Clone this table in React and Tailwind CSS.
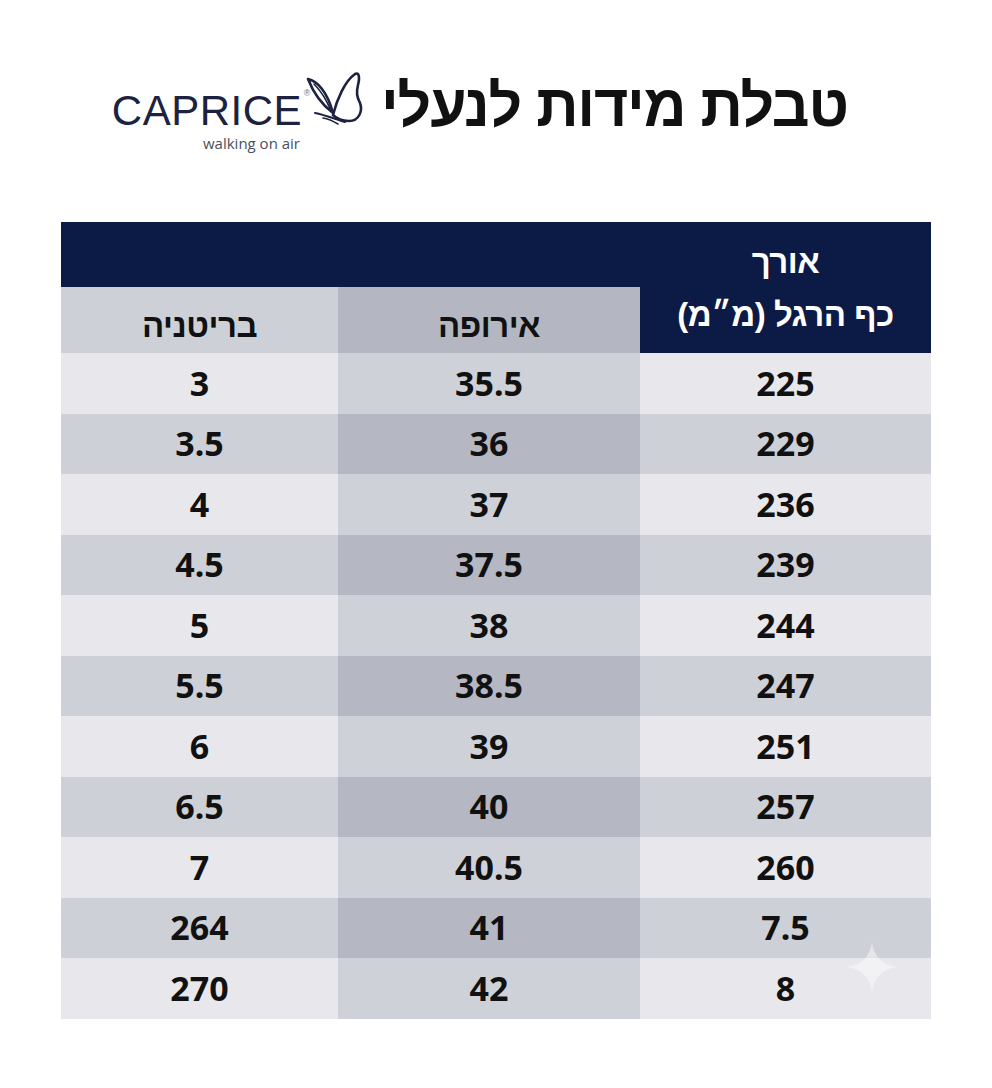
import React from "react";

const rows = [
  ["3", "35.5", "225"],
  ["3.5", "36", "229"],
  ["4", "37", "236"],
  ["4.5", "37.5", "239"],
  ["5", "38", "244"],
  ["5.5", "38.5", "247"],
  ["6", "39", "251"],
  ["6.5", "40", "257"],
  ["7", "40.5", "260"],
  ["264", "41", "7.5"],
  ["270", "42", "8"],
];

const heb = {
  fontFamily: '"Liberation Sans Narrow", "Liberation Sans", "DejaVu Sans", sans-serif',
};
const num = { fontFamily: '"Noto Sans", "Open Sans", sans-serif' };

const Butterfly = () => (
  <svg width="60" height="62" viewBox="0 0 60 60" fill="none" stroke="#1c2240" strokeWidth="2.6" strokeLinecap="round" strokeLinejoin="round">
    <path d="M28 44 C 32 28, 40 10, 50 3 C 54 1, 55 6, 53 14 C 51 22, 52 26, 55 32 C 58 40, 54 50, 44 50 C 38 50, 32 48, 28 44 Z" />
    <path d="M3 8 C 12 10, 22 20, 28 42 C 20 36, 10 26, 3 8 Z" />
    <path d="M9 13 C 16 20, 22 30, 26 40" strokeWidth="1.6" />
    <path d="M10 42 C 20 44, 30 48, 40 51" strokeWidth="2" />
    <path d="M18 47 C 24 48, 28 50, 33 53" strokeWidth="1.6" />
  </svg>
);

const Logo = () => (
  <div className="flex items-start h-[80px]">
    <div className="flex flex-col items-end pt-[22px] w-[190px]">
      <span className="relative text-[42px] leading-none text-[#1c2240] tracking-[0.5px]" style={{ fontFamily: '"Liberation Sans", sans-serif' }}>
        CAPRICE
        <span className="absolute -right-[9px] -top-[1px] text-[9px] leading-none text-[#6b6f80]">®</span>
      </span>
      <span className="mt-[4px] text-[15px] leading-none text-[#4a4f62] pr-[2px]" style={{ fontFamily: '"Open Sans", sans-serif' }}>
        walking on air
      </span>
    </div>
    <div className="ml-[3px] pt-[2px]">
      <Butterfly />
    </div>
  </div>
);

export default function App() {
  return (
    <div className="w-[992px] h-[1088px] bg-white overflow-hidden">
      <div className="pt-[68px] pl-[112px] flex items-center h-[148px]">
        <Logo />
        <h1 dir="rtl" className="ml-[16px] text-[59px] font-bold leading-none text-[#111] tracking-[-1.2px] pb-[4px]" style={heb}>
          טבלת מידות לנעלי
        </h1>
      </div>

      <div className="relative mt-[74px] ml-[61px] w-[870px] grid grid-cols-[277px_302px_291px]">
        <div className="col-span-2 h-[65px] bg-[#0c1b46]" />
        <div dir="rtl" className="row-span-2 bg-[#0c1b46] text-white flex flex-col items-center justify-center text-[33px] font-bold leading-[53px] tracking-[-0.5px]" style={heb}>
          <span>אורך</span>
          <span>כף הרגל (מ״מ)</span>
        </div>
        <div dir="rtl" className="h-[66px] bg-[#cdd0d7] flex items-center justify-center text-[33px] font-bold text-[#111] pt-[12px] tracking-[-0.5px]" style={heb}>
          בריטניה
        </div>
        <div dir="rtl" className="h-[66px] bg-[#b4b7c2] flex items-center justify-center text-[33px] font-bold text-[#111] pt-[12px] tracking-[-0.5px]" style={heb}>
          אירופה
        </div>

        {rows.map((r, i) => {
          const odd = i % 2 === 1;
          return (
            <React.Fragment key={i}>
              <div className={`h-[60.5px] flex items-center justify-center text-[34px] font-bold text-[#111] ${odd ? "bg-[#cdd0d7]" : "bg-[#e8e8ec]"}`} style={num}>
                {r[0]}
              </div>
              <div className={`h-[60.5px] flex items-center justify-center text-[34px] font-bold text-[#111] ${odd ? "bg-[#b5b8c3]" : "bg-[#ced1d8]"}`} style={num}>
                {r[1]}
              </div>
              <div className={`h-[60.5px] flex items-center justify-center text-[34px] font-bold text-[#111] ${odd ? "bg-[#cdd0d7]" : "bg-[#e8e8ec]"}`} style={num}>
                {r[2]}
              </div>
            </React.Fragment>
          );
        })}

        <svg className="absolute left-[786px] top-[720px]" width="50" height="50" viewBox="0 0 50 50">
          <path d="M25 0 C 27 15, 35 23, 50 25 C 35 27, 27 35, 25 50 C 23 35, 15 27, 0 25 C 15 23, 23 15, 25 0 Z" fill="#ffffff" fillOpacity="0.45" />
        </svg>
      </div>
    </div>
  );
}
